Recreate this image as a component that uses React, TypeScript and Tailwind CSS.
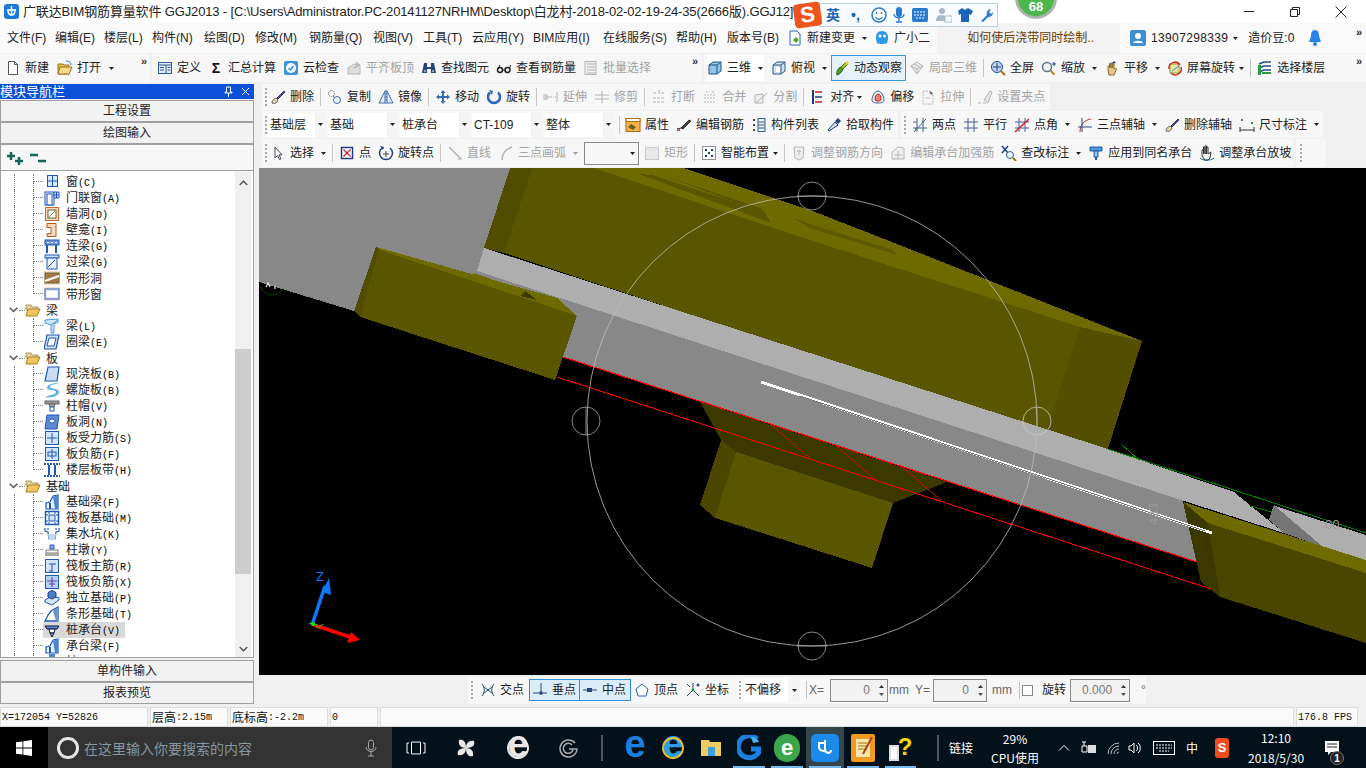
import React, { FC, ReactNode } from "react";
import clsx from "clsx";

// small helpers ---------------------------------------------------------------
const Svg: FC<{ children: ReactNode; w?: number; h?: number }> = ({ children, w = 16, h = 16 }) => (
	<svg width={w} height={h} viewBox={`0 0 ${w} ${h}`} className="shrink-0 block">
		{children}
	</svg>
);

const Caret: FC<{ c?: string }> = ({ c = "#222" }) => (
	<svg width="5" height="3" viewBox="0 0 5 3" className="shrink-0 block">
		<path d="M0 0h5L2.5 3z" fill={c} />
	</svg>
);

const Grip = () => (
	<div className="flex flex-col gap-[2px] shrink-0">
		<i className="block w-[2px] h-[2px] bg-[#a8a8a8]" />
		<i className="block w-[2px] h-[2px] bg-[#a8a8a8]" />
		<i className="block w-[2px] h-[2px] bg-[#a8a8a8]" />
		<i className="block w-[2px] h-[2px] bg-[#a8a8a8]" />
		<i className="block w-[2px] h-[2px] bg-[#a8a8a8]" />
	</div>
);

const Sep = () => <div className="w-px h-[18px] bg-[#c4c4c4] -mx-px shrink-0" />;

const More = () => <span className="text-[11px] leading-none font-bold text-[#333] -mt-3">»</span>;

const Tool: FC<{ icon: ReactNode; label: string; off?: boolean }> = ({ icon, label, off }) => (
	<div className={clsx("flex items-center gap-1 whitespace-nowrap text-xs shrink-0", off ? "text-[#a3a3a3]" : "text-[#222]")}>
		{icon}
		<span>{label}</span>
	</div>
);

// toolbar icons ---------------------------------------------------------------
const G = "#b4b4b4";
const ic = {
	doc: <Svg><path d="M3.5 1.5h6l3 3v10h-9z" fill="#fff" stroke="#555" /><path d="M9.5 1.5v3h3" fill="none" stroke="#555" /></Svg>,
	open: <Svg><path d="M1 4h5l1 1h5v9H1z" fill="#e8b84a" stroke="#9a7420" /><path d="M3 7h12l-3 7H1z" fill="#f7dc8c" stroke="#9a7420" /><path d="M9 1c3 0 5 1 5 4" fill="none" stroke="#4a82c8" /></Svg>,
	def: <Svg><rect x="1.500" y="2.500" width="13" height="11" fill="#e4eefa" stroke="#2c5aa0" /><path d="M1.500 5h13M9 5v8.500M3 7.500h4M3 10h4M10.500 7.500h3M10.500 10h3" stroke="#2c5aa0" /></Svg>,
	sigma: <span className="w-4 text-center text-sm font-bold leading-none text-[#111]">Σ</span>,
	cloud: <Svg><rect x="1" y="1" width="14" height="14" rx="2" fill="#3c92dc" /><circle cx="8" cy="8" r="5" fill="#fff" /><path d="M5.500 8l2 2 3-4" fill="none" stroke="#3c92dc" strokeWidth="1.500" /></Svg>,
	flat: <Svg><path d="M2 14V8l6-4 6 1v9z" fill="#ddd" stroke={G} /><path d="M10 2l3 3-5 3" fill="none" stroke={G} strokeWidth="1.500" /></Svg>,
	binoc: <Svg><path d="M3 3h3v4h4V3h3l2 10h-5V9H6v4H1z" fill="#24477e" /><path d="M3 11h2M11 11h2" stroke="#fff" /></Svg>,
	glass: <Svg><circle cx="4" cy="10" r="2.500" fill="none" stroke="#222" strokeWidth="1.500" /><circle cx="11.500" cy="10" r="2.500" fill="none" stroke="#222" strokeWidth="1.500" /><path d="M6.500 10h2.500M2 9l2-4M13.500 9l1-4" stroke="#222" /></Svg>,
	batch: <Svg><rect x="2" y="1.500" width="11" height="13" fill="#eee" stroke={G} /><path d="M4 4h8M4 7h8M4 10h8M4 13h8" stroke={G} /></Svg>,
	cube: <Svg><path d="M2 5l4-3h8v9l-4 3H2z" fill="#8cc4ea" stroke="#24527e" /><path d="M2 5h8v9M10 5l4-3" fill="none" stroke="#24527e" /></Svg>,
	cubeTop: <Svg><path d="M2 5l4-3h8v9l-4 3H2z" fill="#cfe2f2" stroke="#35587a" /><path d="M2 5h8v9M10 5l4-3" fill="none" stroke="#35587a" /><rect x="5" y="7" width="4" height="5" fill="#fff" /></Svg>,
	orbit: <Svg><path d="M3 15c-1-3 1-7 4-8l2 2c-1 3-3 5-6 6z" fill="#4f9a2c" stroke="#2a5c14" /><path d="M7 7l5-5 2 2-5 5z" fill="#9bc43c" stroke="#5c7c1c" /><circle cx="13" cy="3" r="1.800" fill="#e8d030" /></Svg>,
	cubeOff: <Svg><path d="M2 6l6-4 6 4-6 8z" fill="#ececec" stroke={G} /><path d="M2 6l6 3 6-3M8 9v5M5 4l6 3" fill="none" stroke={G} /></Svg>,
	full: <Svg><circle cx="7" cy="7" r="5.500" fill="#bcd4f0" stroke="#24477e" /><path d="M7 3v8M3 7h8" stroke="#24477e" /><path d="M11 11l4 4" stroke="#a86a10" strokeWidth="2" /></Svg>,
	zoom: <Svg><circle cx="6" cy="7" r="4.500" fill="#eef4fa" stroke="#60768c" strokeWidth="1.500" /><path d="M9.500 10.500l4 4" stroke="#a8842c" strokeWidth="2" /><path d="M13 2v4M11 4h4" stroke="#24477e" /></Svg>,
	pan: <Svg><path d="M4 9V6h1.500v2V3.500h1.500V8V3h1.500v5V4h1.500v5l1.500-1 1 1-2.500 6H5z" fill="#e4c888" stroke="#8a6a2c" /><path d="M10 1v3M8.500 2.500h3" stroke="#24477e" /></Svg>,
	rot: <Svg><rect x="3" y="4" width="9" height="9" fill="#f0e6a0" stroke="#7aa050" /><path d="M2 9a6 6 0 0 1 11-4M14 7a6 6 0 0 1-10 6" fill="none" stroke="#d8301c" strokeWidth="1.500" /><path d="M5 11l4-3 3-2" stroke="#3c92dc" /></Svg>,
	floor: <Svg><path d="M2 4l5-2h7M2 8l5-2h7M2 12l5-2h7" fill="none" stroke="#24527e" strokeWidth="1.500" /><path d="M1 5h3v10H1" fill="#2c9a4c" /><path d="M5 13h9" stroke="#2c9a4c" strokeWidth="2" /></Svg>,
	brush: <Svg><path d="M2 14c3 1 5 0 6-3l-2-2c-2 1-4 2-4 5z" fill="#e4d8a8" stroke="#6a6a6a" /><path d="M7 9l7-7 1 1-7 7z" fill="#5c4c9c" stroke="#38306c" /></Svg>,
	copy: <Svg><circle cx="4.500" cy="4.500" r="3" fill="none" stroke="#555" strokeDasharray="1 1" /><circle cx="10" cy="11" r="3.500" fill="#eef4fa" stroke="#3a6cb0" /><path d="M6 7l2 2" stroke="#3a6cb0" /></Svg>,
	mirror: <Svg><path d="M7 2v12H1zM9 2v12h6z" fill="#e8f0fa" stroke="#3a6cb0" /><path d="M8 1v14" stroke="#3a6cb0" strokeDasharray="2 1" /></Svg>,
	move: <Svg><path d="M8 1l2.500 3H9v3h3V5.500L15 8l-3 2.500V9H9v3h1.500L8 15l-2.500-3H7V9H4v1.500L1 8l3-2.500V7h3V4H5.500z" fill="#3a6cb0" /></Svg>,
	turn: <Svg><path d="M4 3.500A6 6 0 1 0 12 3.500" fill="none" stroke="#2a62c0" strokeWidth="2.500" /><path d="M3 1l4 1-1 4z" fill="#2a62c0" /></Svg>,
	extend: <Svg><path d="M14 3v10M2 8h7" stroke={G} /><rect x="1" y="6" width="3" height="4" fill="none" stroke={G} /><path d="M10 8h3" stroke={G} strokeDasharray="1 1" /></Svg>,
	trim: <Svg><path d="M8 2v12M1 6h14M1 10h14" stroke={G} /></Svg>,
	cut: <Svg><path d="M2 4h4M10 4h4M2 9h12M2 13h12" stroke={G} strokeDasharray="3 1" /><path d="M8 1v4" stroke={G} /></Svg>,
	merge: <Svg><path d="M2 6h12M2 9h12M2 13h12M5 2v3M11 2v3" stroke={G} strokeDasharray="2 1" /></Svg>,
	split: <Svg><path d="M2 14V6l8-1v9zM3 14l11-10" fill="#eee" stroke={G} /></Svg>,
	align: <Svg><path d="M3 1v14" stroke="#1c3c80" strokeWidth="2" /><path d="M5 3h7M5 13h7" stroke="#c82020" strokeWidth="1.500" /><path d="M5 8h7" stroke="#1c3c80" strokeWidth="1.500" /></Svg>,
	offset: <Svg><path d="M8 2c3 0 6 5 6 9 0 2-2 3-6 3s-6-1-6-3c0-4 3-9 6-9z" fill="#e8f0f8" stroke="#3a6090" /><path d="M8 5c2 0 3 3 3 5s-1 2-3 2-3 0-3-2 1-5 3-5z" fill="#f08070" stroke="#c82020" /></Svg>,
	stretch: <Svg><path d="M3 2h7l3 3v10H3z" fill="#f6f6f6" stroke={G} strokeDasharray="2 1" /><path d="M10 2v3h3M6 9h4" stroke={G} /></Svg>,
	grip: <Svg><path d="M1 14h3M6 14h3M11 14l4-11-2-1-6 9z" fill="#e8e8e8" stroke={G} /></Svg>,
	attr: <Svg><rect x="1" y="1.500" width="14" height="13" fill="#f4b44c" stroke="#b06a10" /><rect x="1" y="1.500" width="14" height="3" fill="#fff" stroke="#b06a10" /><path d="M3 10l3-3 5 3-3 3z" fill="#6a5c20" /></Svg>,
	rebar: <Svg><path d="M1 12l4-1M5 11l8-8 2 1-8 8z" fill="#444" stroke="#333" /><path d="M1 13h3" stroke="#c82020" strokeWidth="1.500" /></Svg>,
	list: <Svg><path d="M2 2h2v2H2zM2 7h2v2H2zM2 12h2v2H2z" fill="#444" /><rect x="7" y="1.500" width="7" height="13" fill="#e8f0fa" stroke="#3a6090" /><path d="M7 5h7M7 8h7M7 11h7" stroke="#3a6090" /></Svg>,
	pick: <Svg><path d="M3 14l-1-1 7-8 3 3z" fill="#cfe4f8" stroke="#1c3c80" /><path d="M9 4l3-3 3 3-3 3z" fill="#24477e" /></Svg>,
	two: <Svg><path d="M1 11h14M1 5h4M5 1v14M11 1v14M2 15L14 2" fill="none" stroke="#4a5a9a" /><circle cx="4" cy="12" r="1" fill="#2a9a2a" /><circle cx="11" cy="5" r="1" fill="#2a9a2a" /></Svg>,
	para: <Svg><path d="M1 5h14M1 11h14M5 1v14M11 1v14" stroke="#4a5a9a" /></Svg>,
	angle: <Svg><path d="M1 5h14M1 11h14M5 1v14M11 1v14" stroke="#4a5a9a" /><path d="M1 15L15 2" stroke="#d82020" strokeWidth="1.500" /></Svg>,
	arc: <Svg><path d="M3 15C3 8 7 3 14 2" fill="none" stroke="#c82020" /><path d="M1 10h14M5 1v14" stroke="#2c4c8a" /></Svg>,
	dim: <Svg><path d="M1 10v5M15 10v5M1 13h14" stroke="#333" /><rect x="2" y="2" width="2" height="2" fill="#2a9a2a" /><rect x="12" y="5" width="2" height="2" fill="#2a9a2a" /></Svg>,
	arrow: <Svg><path d="M5 2v11l2.500-2.500 2 4 1.500-.7-2-4H12z" fill="#fff" stroke="#445" /></Svg>,
	point: <Svg><rect x="2.500" y="2.500" width="11" height="11" fill="#fff" stroke="#1c3c80" strokeWidth="1.500" /><path d="M4.500 4.500l7 7M11.500 4.500l-7 7" stroke="#c82020" strokeWidth="1.200" /></Svg>,
	turnPt: <Svg><path d="M4 3a6.500 6.500 0 1 0 8 0" fill="none" stroke="#1c3c80" strokeWidth="1.500" /><path d="M2 1l4 1-1 3z" fill="#1c3c80" /><path d="M8 6v6M5 9h6" stroke="#444" /></Svg>,
	line: <Svg><path d="M2 2l12 12" stroke={G} strokeWidth="1.500" /><path d="M11 14h4" stroke={G} /></Svg>,
	arc3: <Svg><path d="M4 15C4 8 8 4 14 2" fill="none" stroke={G} strokeWidth="1.500" /></Svg>,
	smart: <Svg><rect x="1.500" y="1.500" width="13" height="13" fill="#fff" stroke="#333" strokeDasharray="1 1" /><path d="M4 4h2v2H4zM10 4h2v2h-2zM4 10h2v2H4zM10 10h2v2h-2zM7 7h2v2H7z" fill="#1c3c80" /></Svg>,
	rebarDir: <Svg><path d="M3 2h10l-1 11-4 2-4-2z" fill="#eee" stroke={G} /><path d="M8 5v5M6 7l2-2 2 2" fill="none" stroke={G} /></Svg>,
	rebarAdd: <Svg><path d="M2 14V7l6-5 6 1v11z" fill="#eee" stroke={G} /><path d="M8 6v8M5 10h7" stroke={G} /></Svg>,
	mark: <Svg><path d="M1 1l6 7M7 1L1 8" stroke="#1c3c80" strokeWidth="1.500" /><circle cx="9" cy="10" r="3.500" fill="#e8f0fa" stroke="#3a6090" /><path d="M12 13l3 3" stroke="#a86a10" strokeWidth="2" /></Svg>,
	same: <Svg><path d="M2 2h12v4H2z" fill="#4a9ae0" stroke="#1c5c9c" /><path d="M6 6h4v6H6z" fill="#8cc4ea" stroke="#1c5c9c" /><path d="M8 12v3" stroke="#1c5c9c" strokeWidth="2" /></Svg>,
	slope: <Svg><path d="M3 11V5l1.500-1v5-7h1.500v7V1h1.500v8V2h1.500v7l3-2-1 6-2 2H6z" fill="#f4f4f4" stroke="#333" /><path d="M1 13c3 3 10 3 14 0" fill="none" stroke="#1c5c9c" /></Svg>,
};

// tree icons ------------------------------------------------------------------
const B = "#1f57b8";
const L = "#cfe0f7";
const tr = {
	win: <Svg><rect x="3.500" y="1.500" width="10" height="11" fill="#d7e6fa" stroke={B} /><path d="M8.500 1.500v11M3.500 7h10" stroke={B} /></Svg>,
	door: <Svg><rect x="1" y="2" width="9" height="13" fill="#eef4fc" stroke={B} /><rect x="3" y="4" width="5" height="11" fill="#fff" stroke={B} /><path d="M10 2h5v6h-5zM12.500 2v6M10 5h5" fill={L} stroke={B} /></Svg>,
	hole: <Svg><rect x="1.500" y="1.500" width="13" height="13" fill="#f9d9c0" stroke="#c8662c" /><rect x="4" y="4" width="8" height="8" fill="#fff" stroke="#663" /><path d="M4 12l8-8" stroke="#885" /></Svg>,
	niche: <Svg><path d="M3 1.500h9v13H3v-3h4v-6H3z" fill="#f9d9c0" stroke="#b05a1c" /></Svg>,
	lintelC: <Svg><rect x="1" y="2" width="14" height="5" fill="#6a94d8" stroke={B} /><path d="M3 7v8M12 7v8" stroke={B} strokeWidth="2" /><path d="M3 4.500h2M7 4.500h2M11 4.500h2" stroke="#fff" /></Svg>,
	lintel: <Svg><rect x="1" y="1" width="14" height="3" fill={L} stroke={B} /><rect x="3" y="4" width="10" height="11" fill="#e8f0fc" stroke={B} /><path d="M4 13l7-7" stroke={B} /></Svg>,
	bandH: <Svg><rect x="0" y="1" width="16" height="14" fill="#fbdcc8" /><rect x="1" y="3" width="14" height="10" fill="#a87848" stroke="#663" /><path d="M1 11l14-5" stroke="#fff" strokeWidth="2" /></Svg>,
	bandW: <Svg><rect x="0" y="1" width="16" height="14" fill="#fbe0d2" /><rect x="1" y="3" width="14" height="10" fill="#dfe8fa" stroke="#2c5cc0" /><rect x="3" y="5" width="10" height="6" fill="#fff" /></Svg>,
	beam: <Svg><path d="M1 2l13-1v3l-4 2v9H7V7L1 5z" fill="#cde4fa" stroke="#4c96d8" /><path d="M7 7l7-5" stroke="#4c96d8" /></Svg>,
	ring: <Svg><path d="M3 1h12l-3 14H0z" fill={L} stroke={B} strokeWidth="1.200" /><path d="M5 4h7l-2 8H3z" fill="#fff" stroke={B} /></Svg>,
	slab: <Svg><path d="M4 1h11l-2 14H1z" fill="#c8dcf6" stroke={B} strokeWidth="1.200" /></Svg>,
	spiral: <Svg><path d="M15 1C8 1 3 3 3 6s9 1 9 4-7 3-11 5c7 1 14-1 14-5S6 7 6 5s5-3 9-4z" fill="#5cb0e8" /></Svg>,
	cap: <Svg><rect x="1" y="3" width="14" height="3" fill="#9a9a9a" stroke="#666" /><path d="M5 6h6l-1 3H6z" fill="#aaa" stroke="#666" /><rect x="6" y="9" width="4" height="4" fill="#fff" stroke={B} /></Svg>,
	open: <Svg><path d="M3 1h12l-2 14H1z" fill="#5c8cd8" stroke={B} /><ellipse cx="8" cy="7" rx="3" ry="2" fill="#fff" stroke={B} /></Svg>,
	grid: <Svg><rect x="1.500" y="1.500" width="13" height="13" fill="#d4e4f9" stroke={B} /><path d="M8 3v10M3 8h10" stroke={B} /></Svg>,
	grid2: <Svg><rect x="1.500" y="1.500" width="13" height="13" fill="#d4e4f9" stroke={B} /><rect x="4" y="6" width="8" height="4" fill="none" stroke={B} /><path d="M8 3v10" stroke={B} /></Svg>,
	band: <Svg><path d="M0 2h16M0 14h16" stroke={B} strokeWidth="2" strokeDasharray="2 1" /><path d="M5 3v10M11 3v10" stroke={B} strokeWidth="2" /></Svg>,
	found: <Svg><path d="M2 15V9l4-1 3-6 5-1v14z" fill="#eef4fc" stroke={B} strokeWidth="1.200" /><path d="M9 3l5-2v14h-3z" fill="#4c86d0" /><path d="M6 15V9" stroke={B} strokeWidth="2" /></Svg>,
	raft: <Svg><rect x="1.500" y="1.500" width="13" height="13" fill="#fff" stroke={B} strokeWidth="1.500" /><rect x="5" y="5" width="6" height="6" fill={L} stroke={B} /><path d="M1 5h3M1 11h3M12 5h3M12 11h3M5 1v3M11 1v3M5 12v3M11 12v3" stroke={B} /></Svg>,
	sump: <Svg><path d="M1 2v3l3 1 1 7h6l1-7 3-1V2M4 2v2M12 2v2" fill="none" stroke="#2c5cc0" strokeWidth="1.200" /><path d="M4 8l1 6h6l1-6z" fill="#bcd8f4" /></Svg>,
	pier: <Svg><path d="M6 3h4v4H6z" fill="#8cb4e4" stroke={B} /><path d="M2 8h12v3H2z" fill="#fff" stroke="#777" /><rect x="1" y="11" width="14" height="3" fill="#a8a8a8" /></Svg>,
	main: <Svg><rect x="1.500" y="1.500" width="13" height="13" fill="#d4e4f9" stroke={B} /><path d="M5 6h7M8 6v7M5 13h4" fill="none" stroke={B} /></Svg>,
	neg: <Svg><rect x="1.500" y="1.500" width="13" height="13" fill="#b8d2f2" stroke={B} /><path d="M8 3v10M3 7h10M5 10h6" stroke="#5a3ca0" /></Svg>,
	iso: <Svg><path d="M1 10l7-4 7 2v2l-7 5-7-3z" fill="#d4e4f9" stroke={B} /><path d="M4 3c2-3 6-3 8 0v4l-4 2-4-2z" fill="#4c7ec8" stroke="#1a3c80" /></Svg>,
	strip: <Svg><path d="M1 15l3-6 3-4 7-4v14z" fill="#fff" stroke={B} strokeWidth="1.300" /><path d="M9 5l5-4v14h-2z" fill="#6a94d8" /></Svg>,
	pile: <Svg><path d="M1 4h14l-2 3H3z" fill="#5c8cd8" stroke="#113" /><path d="M5 7h6l-1 4H6z" fill="#fff" stroke="#113" /><path d="M6 11h4l-2 4z" fill="#8cb4e4" stroke="#113" /></Svg>,
	foot: <Svg><path d="M5 0h6v16H5z" fill="#4c86d0" /></Svg>,
};

const Folder = () => (
	<svg width="16" height="13" viewBox="0 0 16 13" className="shrink-0 block">
		<path d="M1 1h5l1 2h6v3H1z" fill="#e9d8a6" stroke="#a89460" />
		<path d="M3 5h12l-3 7H1z" fill="#f5c65a" stroke="#a58030" />
	</svg>
);

type Row = { g?: string; t?: string; k?: string; i?: ReactNode; last?: boolean; sel?: boolean };

const treeRows: Row[] = [
	{ t: "窗", k: "(C)", i: tr.win },
	{ t: "门联窗", k: "(A)", i: tr.door },
	{ t: "墙洞", k: "(D)", i: tr.hole },
	{ t: "壁龛", k: "(I)", i: tr.niche },
	{ t: "连梁", k: "(G)", i: tr.lintelC },
	{ t: "过梁", k: "(G)", i: tr.lintel },
	{ t: "带形洞", i: tr.bandH },
	{ t: "带形窗", i: tr.bandW, last: true },
	{ g: "梁" },
	{ t: "梁", k: "(L)", i: tr.beam },
	{ t: "圈梁", k: "(E)", i: tr.ring, last: true },
	{ g: "板" },
	{ t: "现浇板", k: "(B)", i: tr.slab },
	{ t: "螺旋板", k: "(B)", i: tr.spiral },
	{ t: "柱帽", k: "(V)", i: tr.cap },
	{ t: "板洞", k: "(N)", i: tr.open },
	{ t: "板受力筋", k: "(S)", i: tr.grid },
	{ t: "板负筋", k: "(F)", i: tr.grid2 },
	{ t: "楼层板带", k: "(H)", i: tr.band, last: true },
	{ g: "基础" },
	{ t: "基础梁", k: "(F)", i: tr.found },
	{ t: "筏板基础", k: "(M)", i: tr.raft },
	{ t: "集水坑", k: "(K)", i: tr.sump },
	{ t: "柱墩", k: "(Y)", i: tr.pier },
	{ t: "筏板主筋", k: "(R)", i: tr.main },
	{ t: "筏板负筋", k: "(X)", i: tr.neg },
	{ t: "独立基础", k: "(P)", i: tr.iso },
	{ t: "条形基础", k: "(T)", i: tr.strip },
	{ t: "桩承台", k: "(V)", i: tr.pile, sel: true },
	{ t: "承台梁", k: "(F)", i: tr.found },
	{ t: "桩", k: "(U)", i: tr.foot },
];

const TreeRow: FC<{ row: Row }> = ({ row }) => {
	if (row.g) {
		return (
			<div className="flex h-4 items-center">
				<svg width="9" height="6" viewBox="0 0 9 6" className="ml-[7px] shrink-0 block">
					<path d="M.7.7L4.500 4.500 8.300.7" fill="none" stroke="#555" strokeWidth="1.500" />
				</svg>
				<span className="ml-[1px] w-[6px] border-t border-dotted border-[#808080]" />
				<Folder />
				<span className="ml-[5px] text-xs">{row.g}</span>
			</div>
		);
	}
	return (
		<div className="flex h-4 items-center">
			<span className="ml-[12px] h-full w-[19px] border-l border-dotted border-[#808080]" />
			<div className="flex h-full w-[10px] flex-col">
				<span className="h-[8px] border-l border-b border-dotted border-[#808080]" />
				<span className={clsx("h-[8px]", !row.last && "border-l border-dotted border-[#808080]")} />
			</div>
			<div className={clsx("flex h-4 items-center pr-[5px] pl-[1px]", row.sel && "bg-[#d9d9d9]")}>
				{row.i}
				<span className="ml-[6px] whitespace-nowrap text-xs leading-4">
					{row.t}
					{row.k && <span className="font-['Liberation_Mono'] text-[10px] text-black">{row.k}</span>}
				</span>
			</div>
		</div>
	);
};

const NavButton: FC<{ label: string; h: string }> = ({ label, h }) => (
	<div className={clsx("flex items-center justify-center border border-[#a0a0a0] bg-[#f2f2f2] text-xs text-[#222]", h)}>{label}</div>
);

const NavPanel = () => (
	<div className="flex w-[254px] shrink-0 flex-col">
		<div className="flex h-[15px] items-center justify-between bg-[#0a50d8] pr-[4px] text-[13px] leading-none text-white">
			<span>模块导航栏</span>
			<div className="flex items-center gap-[8px]">
				<svg width="9" height="11" viewBox="0 0 9 11" className="block">
					<path d="M2.500 1h4v5h1.500v1H1V6h1.500zM4.500 7v4" fill="none" stroke="#fff" />
				</svg>
				<svg width="9" height="9" viewBox="0 0 9 9" className="block">
					<path d="M1 1l7 7M8 1L1 8" stroke="#fff" />
				</svg>
			</div>
		</div>
		<NavButton label="工程设置" h="mt-[1px] h-[22px]" />
		<NavButton label="绘图输入" h="h-[22px]" />
		<div className="flex h-[26px] items-center gap-[5px] border border-[#a0a0a0] border-b-0 bg-[#f7f7f7] pl-[5px]">
			<svg width="18" height="16" viewBox="0 0 18 16" className="block">
				<path d="M1 6h8M5 2v8M9 11h8M13 7v8" stroke="#16635a" strokeWidth="2.500" />
			</svg>
			<svg width="18" height="16" viewBox="0 0 18 16" className="block">
				<path d="M1 5h8M9 11h8" stroke="#16635a" strokeWidth="2.500" />
			</svg>
		</div>
		<div className="flex h-[488px] overflow-hidden border border-[#a0a0a0] bg-white pl-[1px]">
			<div className="h-full flex-1 overflow-hidden pt-[3px] font-['Noto_Sans_CJK_SC'] text-[#222]">
				{treeRows.map((r, i) => (
					<TreeRow key={i} row={r} />
				))}
			</div>
			<div className="mr-[2px] flex w-[16px] shrink-0 flex-col bg-[#f0f0f0]">
				<div className="flex h-[178px] justify-center pt-[9px]">
					<svg width="9" height="6" viewBox="0 0 9 6" className="block">
						<path d="M.7 5L4.500 1.300 8.300 5" fill="none" stroke="#555" strokeWidth="1.500" />
					</svg>
				</div>
				<div className="h-[225px] bg-[#cdcdcd]" />
				<div className="flex flex-1 items-end justify-center pb-[5px]">
					<svg width="9" height="6" viewBox="0 0 9 6" className="block">
						<path d="M.7 1L4.500 4.700 8.300 1" fill="none" stroke="#555" strokeWidth="1.500" />
					</svg>
				</div>
			</div>
		</div>
		<NavButton label="单构件输入" h="mt-[2px] h-[22px]" />
		<NavButton label="报表预览" h="h-[22px]" />
	</div>
);

const Combo: FC<{ label: string; w: string }> = ({ label, w }) => (
	<div className={clsx("flex h-[24px] items-center justify-between bg-white pl-[2px] text-xs text-[#222] shrink-0", w)}>
		<span>{label}</span>
		<div className="flex h-full w-[11px] items-center justify-center bg-[#f4f4f4]">
			<Caret />
		</div>
	</div>
);

const Spin: FC<{ value: string; w: string }> = ({ value, w }) => (
	<div className={clsx("flex h-[23px] shrink-0 items-center justify-end border border-[#8a8a8a] bg-[#f2f2f2] text-xs text-[#777]", w)}>
		<span className="mr-[6px]">{value}</span>
		<div className="flex h-full w-[11px] flex-col items-center justify-center gap-[5px]">
			<svg width="5" height="3" viewBox="0 0 5 3" className="block">
				<path d="M0 3h5L2.500 0z" fill="#333" />
			</svg>
			<Caret c="#555" />
		</div>
	</div>
);

// 3D viewport ------------------------------------------------------------------
const OL = "#5a5600";
const OLT = "#6f6a00";
const OLS = "#514d00";
const OLD = "#3c3900";

const Viewport = () => (
	<div className="h-[507px] bg-black">
		<svg viewBox="259 168 1107 507" className="block h-full w-full" shapeRendering="crispEdges">
			<polygon points="259,168 510,168 477,271 563,357 354,311 259,282" fill="#888888" />
			<polygon points="510,168 532,168 504,253 484,248" fill={OLS} />
			<polygon points="532,168 593,168 810,240 1080,327 1046,432 504,253" fill={OL} />
			<polygon points="593,168 683,168 810,210 892,242 1142,341 1080,327 810,240" fill={OLT} />
			<polygon points="1080,327 1142,341 1108,449 1046,432" fill="#544f00" />
			<polygon points="639,174 652,175 765,212 771,223" fill="#5a5600" />
			<polygon points="662,175 760,208 767,214" fill="#5a5600" />
			<polygon points="791,217 810,224 893,250 897,255 810,228" fill="#5f5a00" />

			<polygon points="700,402 947,482 893,503 735,452 721,440" fill={OLD} />
			<polygon points="721,440 736,452 715,518 700,505" fill="#4b4700" />
			<polygon points="736,452 893,503 872,568 715,518" fill={OL} />

			{/* mid grey runs a little under the bright strip so no black sliver shows */}
			<polygon points="480,262 1181,492 1183,502 1197,562 563,357 477,271" fill="#888888" />
			<polygon points="484,248 1108,449 1234,492 1284,533 1181,500 477,271" fill="#aeaeae" />

			<polygon points="1274,505 1269,520 1284,533 1323,547" fill="#757575" />
			<polygon points="1275,506 1366,535 1366,560 1323,547" fill="#aeaeae" />

			<polygon points="354,311 376,247 379,250 360,317" fill={OLS} />
			<polygon points="379,250 577,316 555,380 360,317" fill={OL} />
			<polygon points="376,247 557,298 577,316 379,250" fill={OLT} />
			<polygon points="474,273 525,291 537,300 474,280" fill={OLT} />
			<polygon points="525,291 537,300 520,296" fill={OLD} />

			<polygon points="1183,502 1208,523 1220,597 1201,582" fill={OLD} />
			<polygon points="1183,502 1366,560 1366,573 1208,523" fill={OLT} />
			<polygon points="1208,523 1366,573 1366,643 1220,597" fill="#4a4600" />

			<path d="M563,357L1197,562" stroke="#ff0000" strokeWidth="1.200" />
			<path d="M557,377L1211,589" stroke="#ff0000" />
			<path d="M770,424L810,458M835,445L877,481M902,467L943,502" stroke="#ff0000" strokeWidth=".7" />
			<path d="M1108,449L1366,533M1121,444L1139,460M1250,506L1272,512" stroke="#008000" />
			<path d="M761,382L1212,533" stroke="#fff" strokeWidth="3" />
			<path d="M800,396L1205,531" stroke="#777" strokeWidth="1" />

			<g shapeRendering="auto">
				<circle cx="812" cy="421" r="225" fill="none" stroke="#bdbdbd" strokeWidth=".8" />
				<circle cx="812" cy="196" r="14" fill="none" stroke="#a8a8a8" strokeWidth=".8" />
				<circle cx="812" cy="646" r="14" fill="none" stroke="#a8a8a8" strokeWidth=".8" />
				<circle cx="586" cy="421" r="14" fill="none" stroke="#a8a8a8" strokeWidth=".8" />
				<circle cx="1037" cy="421" r="14" fill="none" stroke="#c8c8c8" strokeWidth=".8" />
				<path d="M797,196h30M797,646h30M586,407v28M1037,407v28" stroke="#a8a8a8" strokeWidth=".8" />

				<path d="M261,287c2,8 16,12 22,1" fill="none" stroke="#008000" strokeWidth=".8" strokeDasharray="2 1" />
				<path d="M266,287l2-4 2,4M275,286v3" stroke="#eee" strokeWidth="1.200" fill="none" />
				<text x="0" y="0" transform="translate(1158,525) rotate(-90)" fontSize="13" fill="#9a9a9a" fontFamily="Liberation Sans">433</text>
				<text x="1325" y="529" fontSize="13" fill="#9a9a9a" fontFamily="Liberation Sans">00</text>

				<path d="M312,625L325,586" stroke="#0a78ff" strokeWidth="3.500" />
				<polygon points="329,578 331,595 322,592" fill="#0a78ff" />
				<text x="316" y="581" fontSize="13" fill="#0a78ff" fontFamily="Liberation Sans">Z</text>
				<path d="M314,625L350,637" stroke="#ff0000" strokeWidth="3.500" />
				<polygon points="360,640 347,643 351,632" fill="#ff0000" />
				<path d="M309,623l6,2M318,628l-2,-4M318,628l5,-4" stroke="#22e022" />
				<circle cx="313" cy="624" r="2" fill="#22e022" />
			</g>
		</svg>
	</div>
);

// top -------------------------------------------------------------------------
const TitleBar = () => (
	<div className="flex h-[23px] shrink-0 items-center bg-white pl-[4px] text-[13px] text-[#222]">
		<svg width="15" height="15" viewBox="0 0 15 15" className="block shrink-0">
			<rect width="15" height="15" rx="3" fill="#1a78d8" />
			<path d="M7.500 2v10M3 6h9M4 6c0 3 1 5 3.500 5S11 9 11 6" fill="none" stroke="#fff" strokeWidth="1.500" />
		</svg>
		<span className="ml-[4px] whitespace-nowrap tracking-[-0.15px]">{"广联达BIM钢筋算量软件 GGJ2013 - [C:\\Users\\Administrator.PC-20141127NRHM\\Desktop\\白龙村-2018-02-02-19-24-35(2666版).GGJ12]"}</span>
		<div className="ml-auto flex items-center">
			<span className="h-px w-[10px] bg-[#222]" />
			<svg width="10" height="10" viewBox="0 0 10 10" className="ml-[36px] block">
				<path d="M.5 2.500h7v7h-7zM2.500 2.500v-2h7v7h-2" fill="none" stroke="#222" />
			</svg>
			<svg width="12" height="12" viewBox="0 0 12 12" className="ml-[35px] mr-[19px] block">
				<path d="M.5.5l11 11M11.500.5l-11 11" stroke="#222" />
			</svg>
		</div>
	</div>
);

const menuLeft = [
	{ m: "文件(F)", w: "w-[48px]" },
	{ m: "编辑(E)", w: "w-[49px]" },
	{ m: "楼层(L)", w: "w-[48px]" },
	{ m: "构件(N)", w: "w-[52px]" },
	{ m: "绘图(D)", w: "w-[51px]" },
	{ m: "修改(M)", w: "w-[54px]" },
	{ m: "钢筋量(Q)", w: "w-[64px]" },
	{ m: "视图(V)", w: "w-[50px]" },
	{ m: "工具(T)", w: "w-[49px]" },
	{ m: "云应用(Y)", w: "w-[61px]" },
	{ m: "BIM应用(I)", w: "w-[70px]" },
	{ m: "在线服务(S)", w: "w-[73px]" },
	{ m: "帮助(H)", w: "w-[51px]" },
	{ m: "版本号(B)", w: "w-[60px]" },
];

const MenuBar = () => (
	<div className="flex h-[30px] shrink-0 items-center bg-[#f9f9f9] text-xs text-[#222]">
		<div className="ml-[7px] flex shrink-0 items-center">
			{menuLeft.map((item) => (
				<span key={item.m} className={clsx("whitespace-nowrap", item.w)}>
					{item.m}
				</span>
			))}
		</div>
		<div className="flex items-center gap-[7px]">
			<Tool
				label="新建变更"
				icon={
					<Svg>
						<path d="M3 1h7l3 3v11H3z" fill="#fff" stroke="#2a62c0" />
						<path d="M9 7l3 3-3 3-3-3z" fill="#5aa02c" />
					</Svg>
				}
			/>
			<Caret />
			<Tool
				label="广小二"
				icon={
					<Svg>
						<path d="M8 1c4 0 6 3 6 6 0 4-1 7-2 7l-1-1-1 1H6l-1-1-1 1c-1 0-2-3-2-7 0-3 2-6 6-6z" fill="#2c9ae8" />
						<circle cx="6" cy="6" r="1.500" fill="#fff" />
						<circle cx="10.500" cy="6" r="1.500" fill="#fff" />
					</Svg>
				}
			/>
		</div>
		<div className="ml-[7px] flex h-full w-[183px] shrink-0 items-center justify-end bg-[#f3f3f3] pr-[26px] text-[#6a3b00]">
			<span className="whitespace-nowrap">如何使后浇带同时绘制..</span>
		</div>
		<div className="ml-[10px] flex items-center gap-[5px]">
			<svg width="16" height="16" viewBox="0 0 16 16" className="block shrink-0">
				<rect width="16" height="16" rx="2" fill="#3c8fd0" />
				<circle cx="8" cy="6" r="3" fill="#fff" />
				<path d="M3 13c1-3 9-3 10 0z" fill="#fff" />
			</svg>
			<span className="tracking-[0.35px]">13907298339</span>
			<Caret />
			<span className="ml-[5px]">造价豆:0</span>
			<svg width="12" height="16" viewBox="0 0 12 16" className="ml-[10px] block">
				<path d="M6 0c3 0 4 3 4 6l2 6H0l2-6c0-3 1-6 4-6z" fill="#2a82e8" />
				<circle cx="6" cy="14" r="2" fill="#2a82e8" />
			</svg>
		</div>
		<span className="ml-auto mr-[4px] -mt-3 text-[11px] font-bold leading-none">»</span>
	</div>
);

const ToolRowTop = () => (
	<div className="flex h-[30px] shrink-0 items-stretch gap-[2px] pb-[2px]">
		<div className="flex w-[150px] items-center gap-[8px] bg-[#f7f7f7] pl-[5px] pr-[3px]">
			<Tool icon={ic.doc} label="新建" />
			<Tool icon={ic.open} label="打开" />
			<Caret />
			<div className="ml-auto flex">
				<More />
			</div>
		</div>
		<div className="flex w-[550px] items-center gap-[7px] bg-[#f7f7f7] pl-[5px] pr-[4px]">
			<Tool icon={ic.def} label="定义" />
			<Tool icon={ic.sigma} label="汇总计算" />
			<Tool icon={ic.cloud} label="云检查" />
			<Tool icon={ic.flat} label="平齐板顶" off />
			<Tool icon={ic.binoc} label="查找图元" />
			<Tool icon={ic.glass} label="查看钢筋量" />
			<Tool icon={ic.batch} label="批量选择" off />
			<div className="ml-auto flex">
				<More />
			</div>
		</div>
		<div className="flex flex-1 items-center gap-[7px] bg-[#f7f7f7] pl-[3px] pr-[4px]">
			<div className="flex h-[26px] items-center gap-[7px] bg-white pr-[1px]">
				<Tool icon={ic.cube} label="三维" />
				<Caret />
			</div>
			<Tool icon={ic.cubeTop} label="俯视" />
			<Caret />
			<div className="-ml-[3px] -mr-[4px] flex h-[26px] items-center border border-[#3a96dc] bg-[#e6f2fb] pl-[2px] pr-[3px]">
				<Tool icon={ic.orbit} label="动态观察" />
			</div>
			<Tool icon={ic.cubeOff} label="局部三维" off />
			<Sep />
			<Tool icon={ic.full} label="全屏" />
			<Tool icon={ic.zoom} label="缩放" />
			<Caret />
			<Tool icon={ic.pan} label="平移" />
			<Caret />
			<Tool icon={ic.rot} label="屏幕旋转" />
			<div className="-ml-[3px]">
				<Caret />
			</div>
			<Sep />
			<Tool icon={ic.floor} label="选择楼层" />
			<div className="ml-auto flex">
				<More />
			</div>
		</div>
	</div>
);

const RowEdit = () => (
	<div className="flex h-[26px] shrink-0 pl-[3px]">
		<div className="flex w-[788px] items-center gap-[7px] bg-[#f7f7f7] pl-[3px]">
			<Grip />
			<div className="-ml-[4px] flex items-center gap-[7px]">
				<Tool icon={ic.brush} label="删除" />
				<Sep />
				<Tool icon={ic.copy} label="复制" />
				<Tool icon={ic.mirror} label="镜像" />
				<Sep />
				<Tool icon={ic.move} label="移动" />
				<Tool icon={ic.turn} label="旋转" />
				<Sep />
				<Tool icon={ic.extend} label="延伸" off />
				<Tool icon={ic.trim} label="修剪" off />
				<Sep />
				<Tool icon={ic.cut} label="打断" off />
				<Tool icon={ic.merge} label="合并" off />
				<Tool icon={ic.split} label="分割" off />
				<Sep />
				<Tool icon={ic.align} label="对齐" />
				<div className="-ml-[4px]">
					<Caret />
				</div>
				<div className="ml-[1px]">
					<Tool icon={ic.offset} label="偏移" />
				</div>
				<div className="-ml-[1px]">
					<Tool icon={ic.stretch} label="拉伸" off />
				</div>
				<Sep />
				<Tool icon={ic.grip} label="设置夹点" off />
			</div>
		</div>
	</div>
);

const RowDraw = () => (
	<div className="mt-[1px] flex h-[27px] shrink-0 gap-[3px] pl-[3px]">
		<div className="flex w-[636px] items-center gap-[7px] bg-[#f7f7f7] pl-[3px]">
			<Grip />
			<div className="-ml-[6px] flex items-center gap-[2px]">
				<Combo label="基础层" w="w-[58px]" />
				<Combo label="基础" w="w-[70px]" />
				<Combo label="桩承台" w="w-[70px]" />
				<Combo label="CT-109" w="w-[70px]" />
				<Combo label="整体" w="w-[70px]" />
			</div>
			<div className="-ml-px">
				<Sep />
			</div>
			<div className="-ml-[2px] flex items-center gap-[7px]">
				<Tool icon={ic.attr} label="属性" />
				<Tool icon={ic.rebar} label="编辑钢筋" />
				<Tool icon={ic.list} label="构件列表" />
				<Tool icon={ic.pick} label="拾取构件" />
			</div>
		</div>
		<div className="flex w-[422px] items-center gap-[7px] bg-[#f7f7f7] pl-[3px]">
			<Grip />
			<div className="-ml-[1px] flex items-center gap-[7px]">
				<Tool icon={ic.two} label="两点" />
				<Tool icon={ic.para} label="平行" />
				<Tool icon={ic.angle} label="点角" />
				<Caret />
				<Tool icon={ic.arc} label="三点辅轴" />
				<Caret />
				<Tool icon={ic.brush} label="删除辅轴" />
				<Tool icon={ic.dim} label="尺寸标注" />
				<Caret />
			</div>
		</div>
	</div>
);

const RowPlace = () => (
	<div className="mt-[1px] flex h-[29px] shrink-0 gap-[3px] pb-[1px] pl-[3px]">
		<div className="flex w-[1031px] items-center gap-[7px] bg-[#f7f7f7] pl-[3px]">
			<Grip />
			<div className="-ml-[4px] flex shrink-0 items-center gap-[7px]">
				<Tool icon={ic.arrow} label="选择" />
				<Caret />
				<Sep />
				<Tool icon={ic.point} label="点" />
				<Tool icon={ic.turnPt} label="旋转点" />
				<Sep />
				<Tool icon={ic.line} label="直线" off />
				<Tool icon={ic.arc3} label="三点画弧" off />
				<Caret c="#999" />
				<div className="-mx-px flex h-[23px] w-[55px] shrink-0 items-center justify-end border border-[#8a8a8a] bg-[#f7f7f7] pr-[3px]">
					<Caret />
				</div>
				<div className="flex shrink-0 items-center gap-[5px] whitespace-nowrap text-xs text-[#a3a3a3]">
					<span className="h-[13px] w-[14px] border border-[#c8c8c8] bg-[#e8e8e8]" />
					<span>矩形</span>
				</div>
				<Sep />
				<Tool icon={ic.smart} label="智能布置" />
				<div className="-ml-[3px]">
					<Caret />
				</div>
				<Sep />
				<Tool icon={ic.rebarDir} label="调整钢筋方向" off />
				<Tool icon={ic.rebarAdd} label="编辑承台加强筋" off />
				<Tool icon={ic.mark} label="查改标注" />
				<Caret />
				<Tool icon={ic.same} label="应用到同名承台" />
				<Tool icon={ic.slope} label="调整承台放坡" />
			</div>
		</div>
		<div className="flex w-[30px] items-center bg-[#f7f7f7] pl-[4px]">
			<Grip />
		</div>
	</div>
);

// snap bar --------------------------------------------------------------------
const snap = {
	cross: <Svg><path d="M2 2c3 4 3 8 0 12M14 2c-3 4-3 8 0 12M4 5l8 6M12 5l-8 6" fill="none" stroke="#24477e" /></Svg>,
	perp: <Svg><path d="M1 11h14M9 1v12" stroke="#24477e" /><rect x="7.500" y="9.500" width="3" height="3" fill="#24477e" /></Svg>,
	mid: <Svg><path d="M1 8h14" stroke="#24477e" /><rect x="5" y="6" width="5" height="4" fill="#24477e" /></Svg>,
	apex: <Svg><path d="M8 2l6 5-2 7H4L2 7z" fill="#fff" stroke="#2a62c0" /></Svg>,
	coord: <Svg><path d="M2 14l6-6M8 8V1M8 8l6 6M2 2l3 3" fill="none" stroke="#24477e" /><circle cx="8" cy="8" r="1.500" fill="#2a9a2a" /><circle cx="13" cy="3" r="1.500" fill="#24477e" /></Svg>,
};

const SnapBar = () => (
	<div className="flex h-[30px] shrink-0 items-center bg-[#f0f0f0] pl-[209px]">
		<div className="flex h-[27px] w-[678px] items-center bg-[#f7f7f7] text-xs text-[#222]">
			<div className="ml-[3px]">
				<Grip />
			</div>
			<div className="ml-[7px]">
				<Tool icon={snap.cross} label="交点" />
			</div>
			<div className="ml-[5px] flex h-[22px] w-[51px] items-center border border-[#2f8edb] bg-[#dcedfa] pl-[2px]">
				<Tool icon={snap.perp} label="垂点" />
			</div>
			<div className="-ml-px flex h-[22px] w-[52px] items-center border border-[#2f8edb] bg-[#dcedfa] pl-[2px]">
				<Tool icon={snap.mid} label="中点" />
			</div>
			<div className="ml-[3px]">
				<Tool icon={snap.apex} label="顶点" />
			</div>
			<div className="ml-[7px]">
				<Tool icon={snap.coord} label="坐标" />
			</div>
			<div className="ml-[10px]">
				<Grip />
			</div>
			<div className="ml-[2px] flex h-[24px] w-[57px] items-center justify-between bg-white pl-[2px]">
				<span>不偏移</span>
				<div className="flex h-full w-[12px] items-center justify-center bg-[#f4f4f4]">
					<Caret />
				</div>
			</div>
			<span className="ml-[6px] h-[18px] w-px bg-[#c4c4c4]" />
			<span className="ml-[2px] w-[17px] text-[#666]">X=</span>
			<div className="ml-[4px]">
				<Spin value="0" w="w-[58px]" />
			</div>
			<span className="ml-[1px] w-[22px] text-[#666]">mm</span>
			<span className="ml-[4px] w-[15px] text-[#666]">Y=</span>
			<div className="ml-[3px]">
				<Spin value="0" w="w-[54px]" />
			</div>
			<span className="ml-[5px] w-[22px] text-[#666]">mm</span>
			<span className="ml-[5px] h-[18px] w-px bg-[#c4c4c4]" />
			<span className="ml-[2px] h-[11px] w-[11px] border border-[#888] bg-white" />
			<span className="ml-[9px]">旋转</span>
			<div className="ml-[4px]">
				<Spin value="0.000" w="w-[60px]" />
			</div>
			<span className="ml-[11px] text-[#666]">°</span>
		</div>
	</div>
);

// status / taskbar ------------------------------------------------------------
const Cell: FC<{ w: string; children?: ReactNode }> = ({ w, children }) => (
	<div className={clsx("flex h-[20px] shrink-0 items-center border border-[#dcdcdc] bg-[#fafafa] pl-[1px] font-['Liberation_Mono'] text-[10px] text-[#111]", w)}>{children}</div>
);

const Cjk: FC<{ children: ReactNode }> = ({ children }) => <span className="font-['Noto_Sans_CJK_SC'] text-xs font-normal">{children}</span>;

const StatusBar = () => (
	<div className="flex h-[22px] shrink-0 items-start gap-[2px] bg-[#f0f0f0] pt-[2px]">
		<Cell w="w-[148px]">X=172054 Y=52826</Cell>
		<Cell w="w-[78px]">
			<Cjk>层高</Cjk>:2.15m
		</Cell>
		<Cell w="w-[98px]">
			<Cjk>底标高</Cjk>:-2.2m
		</Cell>
		<Cell w="w-[48px]">0</Cell>
		<Cell w="w-[914px]" />
		<Cell w="w-[62px]">176.8 FPS</Cell>
	</div>
);

const Slot: FC<{ w?: string; children?: ReactNode; on?: boolean; run?: boolean }> = ({ w = "w-[38px]", children, on, run }) => (
	<div className={clsx("relative flex h-full shrink-0 items-center justify-center", w, on && "bg-[#34454c]")}>
		{children}
		{run && <span className="absolute bottom-0 left-[3px] right-[3px] h-[2px] bg-[#76b9ed]" />}
	</div>
);

const IeE: FC<{ c: string; ring?: string }> = ({ c, ring }) => (
	<div className="relative flex h-[26px] w-[26px] items-center justify-center">
		{ring && <span className={clsx("absolute inset-[2px] -rotate-[30deg] rounded-[50%] border-2", ring)} />}
		<span className={clsx("-mt-[7px] font-['Liberation_Sans'] text-[38px] font-bold leading-none", c)}>e</span>
	</div>
);

const TaskBar = () => (
	<div className="flex h-[41px] shrink-0 items-center bg-[#03121a] text-white">
		<div className="flex h-full w-[48px] shrink-0 items-center justify-center bg-black">
			<svg width="16" height="16" viewBox="0 0 16 16" className="block">
				<path d="M0 2.300l6.500-.9v6.200H0zM7.300 1.300L16 0v7.600H7.300zM0 8.400h6.500v6.200L0 13.700zM7.300 8.400H16V16l-8.700-1.200z" fill="#fff" />
			</svg>
		</div>
		<div className="flex h-full w-[344px] shrink-0 items-center bg-[#333] pl-[9px] font-['Noto_Sans_CJK_SC']">
			<span className="h-[22px] w-[22px] rounded-full border-[3px] border-[#e8e8e8]" />
			<span className="ml-[5px] whitespace-nowrap text-sm text-[#85969f]">在这里输入你要搜索的内容</span>
			<svg width="12" height="18" viewBox="0 0 12 18" className="ml-auto mr-[15px] block">
				<rect x="3.500" y="1" width="5" height="10" rx="2.500" fill="none" stroke="#aaa" />
				<path d="M1 8c0 6 10 6 10 0M6 13v4M3 17h6" fill="none" stroke="#aaa" />
			</svg>
		</div>
		<Slot w="w-[48px]">
			<svg width="20" height="14" viewBox="0 0 20 14" className="block">
				<path d="M5.500 1h9v12h-9zM3 2H1v10h2M17 2h2v10h-2" fill="none" stroke="#fff" />
			</svg>
		</Slot>
		<Slot w="w-[52px]">
			<svg width="22" height="22" viewBox="0 0 22 22" className="block">
				<path d="M11 11C6 11 3 8 4 3c3-1 7 0 7 8zM11 11c0-5 3-8 8-7 1 3 0 7-8 7zM11 11c5 0 8 3 7 8-3 1-7 0-7-8zM11 11c0 5-3 8-8 7-1-3 0-7 8-7z" fill="#e8e8e8" />
			</svg>
		</Slot>
		<Slot w="w-[52px]">
			<IeE c="text-[#e8e8e8]" ring="border-[#e8e8e8]" />
		</Slot>
		<Slot w="w-[48px]">
			<svg width="22" height="22" viewBox="0 0 22 22" className="block">
				<path d="M18 6a8.500 8.500 0 1 0 2 6h-8M15 8a5 5 0 1 0 1 5" fill="none" stroke="#aaa" strokeWidth="1.500" />
			</svg>
		</Slot>
		<div className="flex h-full w-[24px] shrink-0 items-center pl-[9px]">
			<span className="h-[26px] w-[2px] bg-[#555]" />
		</div>
		<Slot>
			<IeE c="text-[#1b7fe0]" />
		</Slot>
		<Slot>
			<IeE c="text-[#2aa0e8]" ring="border-[#e8c030]" />
		</Slot>
		<Slot>
			<svg width="20" height="18" viewBox="0 0 20 18" className="block">
				<path d="M0 1h8l1 2h11v14H0z" fill="#f0cc62" />
				<rect x="7" y="8" width="7" height="9" fill="#3ba0e0" />
			</svg>
		</Slot>
		<Slot run>
			<svg width="24" height="26" viewBox="0 0 24 26" className="block">
				<path d="M20 4A11 11 0 1 0 23 14h-9" fill="none" stroke="#1b7fe0" strokeWidth="5" />
				<path d="M14 2c4 0 7 2 8 5l-6 1z" fill="#4ab0f0" />
			</svg>
		</Slot>
		<Slot run>
			<div className="flex h-[28px] w-[26px] items-center justify-center rounded-full bg-[#3aa84a] text-[22px] font-bold leading-none text-white">e</div>
		</Slot>
		<Slot on run>
			<div className="flex h-[28px] w-[28px] items-center justify-center rounded-[5px] bg-[#1b8ae8]">
				<svg width="18" height="18" viewBox="0 0 18 18" className="block">
					<path d="M9 1v9c0 5 6 5 6 1M9 4H3v4c0 3 3 4 6 4" fill="none" stroke="#fff" strokeWidth="2" />
				</svg>
			</div>
		</Slot>
		<Slot run>
			<svg width="24" height="28" viewBox="0 0 24 28" className="block">
				<rect width="24" height="28" rx="2" fill="#f19a20" />
				<rect x="5" y="5" width="14" height="18" fill="#f8e8b0" />
				<path d="M7 9h9M7 12h9M7 15h9" stroke="#a86a10" />
				<path d="M12 20L21 3" stroke="#b04010" strokeWidth="2" />
			</svg>
		</Slot>
		<Slot w="w-[37px]" run>
			<div className="flex items-end">
				<span className="h-[16px] w-[10px] border-2 border-[#ddd] bg-white" />
				<span className="-ml-[1px] mb-[2px] text-[24px] font-bold leading-none text-[#f5d800]">?</span>
			</div>
		</Slot>
		<div className="flex h-full w-[30px] shrink-0 items-center pl-[18px]">
			<span className="h-[26px] w-[2px] bg-[#555]" />
		</div>
		<span className="whitespace-nowrap font-['Noto_Sans_CJK_SC'] text-xs">链接</span>
		<div className="ml-[13px] flex w-[58px] shrink-0 flex-col items-center font-['Noto_Sans_CJK_SC'] text-xs leading-[19px]">
			<span>29%</span>
			<span className="whitespace-nowrap">CPU使用</span>
		</div>
		<div className="ml-[14px] flex h-full items-center gap-[8px]">
			<svg width="12" height="7" viewBox="0 0 12 7" className="block">
				<path d="M1 6.500l5-5 5 5" fill="none" stroke="#fff" />
			</svg>
			<svg width="16" height="14" viewBox="0 0 16 14" className="ml-[3px] block">
				<path d="M1 1h4M3 1v4M1 5h5v6H1z" fill="none" stroke="#fff" />
				<rect x="7" y="4" width="8" height="8" fill="#ddd" />
			</svg>
			<svg width="16" height="14" viewBox="0 0 16 14" className="ml-[2px] block">
				<path d="M1 13a11 11 0 0 1 11-11M4 13a8 8 0 0 1 8-8M7 13a5 5 0 0 1 5-5M10 13a2 2 0 0 1 2-2" fill="none" stroke="#bbb" />
			</svg>
			<svg width="14" height="14" viewBox="0 0 14 14" className="-ml-[3px] block">
				<path d="M1 5h2l3-3v10L3 9H1zM8 4c2 1 2 5 0 6M10 2c3 2 3 8 0 10" fill="none" stroke="#fff" />
			</svg>
			<svg width="22" height="14" viewBox="0 0 22 14" className="ml-[3px] block">
				<rect x=".5" y=".5" width="21" height="13" fill="none" stroke="#fff" />
				<path d="M3 4h16M3 7h16M6 10h10" stroke="#fff" strokeDasharray="2 1" />
			</svg>
			<span className="ml-[3px] font-['Noto_Sans_CJK_SC'] text-xs">中</span>
			<div className="ml-[9px] flex h-[20px] w-[14px] items-center justify-center rounded-[3px] bg-[#f04c1c] text-[13px] font-bold leading-none">S</div>
		</div>
		<div className="ml-[15px] flex w-[64px] shrink-0 flex-col items-center font-['Noto_Sans_CJK_SC'] text-xs leading-[20px]">
			<span>12:10</span>
			<span className="whitespace-nowrap">2018/5/30</span>
		</div>
		<div className="relative ml-[12px] flex h-full w-[24px] items-center justify-center">
			<svg width="16" height="16" viewBox="0 0 16 16" className="block">
				<path d="M1 1h14v11H7l-3 3v-3H1z" fill="#fff" />
				<path d="M3 4h10M3 7h10" stroke="#222" />
			</svg>
			<span className="absolute bottom-[3px] right-[0px] flex h-[14px] w-[14px] items-center justify-center rounded-full border border-[#777] bg-[#222] text-[10px] font-bold">1</span>
		</div>
	</div>
);

const ImeBar = () => (
	<div className="absolute left-[794px] top-[3px] flex items-center">
		<div className="z-10 flex h-[24px] w-[27px] -rotate-[8deg] items-center justify-center rounded-[4px] bg-[#f0541e] text-[22px] font-bold leading-none text-white">S</div>
		<div className="-ml-[2px] flex h-[24px] w-[179px] items-center border border-[#bcd0e4] bg-[#f7fbff] pl-[6px]">
			<span className="text-sm font-bold text-[#1c66b8]">英</span>
			<span className="ml-[11px] text-sm font-bold leading-none text-[#1c66b8]">•,</span>
			<svg width="16" height="16" viewBox="0 0 16 16" className="ml-[11px] block">
				<circle cx="8" cy="8" r="7" fill="none" stroke="#2a7ad0" strokeWidth="1.500" />
				<path d="M5.500 5v2M10.500 5v2M4.500 10c2 3 5 3 7 0" fill="none" stroke="#2a7ad0" strokeWidth="1.300" />
			</svg>
			<svg width="12" height="16" viewBox="0 0 12 16" className="ml-[6px] block">
				<rect x="3" y="0" width="6" height="10" rx="3" fill="#2a7ad0" />
				<path d="M1 7c0 5 10 5 10 0M6 11v4M3 15h6" fill="none" stroke="#2a7ad0" strokeWidth="1.300" />
			</svg>
			<svg width="16" height="14" viewBox="0 0 16 14" className="ml-[7px] block">
				<rect width="16" height="14" rx="2" fill="#2a7ad0" />
				<path d="M2 4h12M2 7h12M4 10h8" stroke="#fff" strokeDasharray="2 1" />
			</svg>
			<svg width="16" height="16" viewBox="0 0 16 16" className="ml-[8px] block">
				<circle cx="6" cy="4" r="3" fill="#a8b8c8" />
				<path d="M0 14c0-5 3-6 6-6 2 0 3 1 3 2v4z" fill="#a8b8c8" />
				<rect x="9" y="9" width="7" height="6" fill="#fff" stroke="#a8b8c8" />
			</svg>
			<svg width="15" height="14" viewBox="0 0 15 14" className="ml-[6px] block">
				<path d="M4 0l3 2 3-2 5 3-2 4-2-1v8H3V6L1 7 0 3z" fill="#1c66b8" />
			</svg>
			<svg width="14" height="14" viewBox="0 0 14 14" className="ml-[7px] block">
				<path d="M1 13l6-6c-1-3 1-6 4-6l-2 3 2 2 2-2c0 3-2 5-5 5l-5 5z" fill="#2a7ad0" />
			</svg>
		</div>
	</div>
);

const App = () => (
	<div className="relative flex h-[768px] w-[1366px] flex-col overflow-hidden bg-[#f0f0f0] font-['Liberation_Sans','Noto_Sans_CJK_SC',sans-serif]">
		<TitleBar />
		<MenuBar />
		<div className="mt-[1px]">
			<ToolRowTop />
		</div>
		<div className="flex h-[621px] shrink-0">
			<NavPanel />
			<div className="ml-[5px] flex w-[1107px] shrink-0 flex-col">
				<RowEdit />
				<RowDraw />
				<RowPlace />
				<Viewport />
				<SnapBar />
			</div>
		</div>
		<StatusBar />
		<TaskBar />

		{/* floating over the title bar */}
		<ImeBar />
		<div className="absolute left-[1015px] -top-[23px] flex h-[42px] w-[42px] items-end justify-center rounded-full border-[3px] border-[#aab4aa] bg-[#4cb84c] pb-[3px] text-[13px] font-bold leading-none text-white">68</div>
	</div>
);

export default App;
